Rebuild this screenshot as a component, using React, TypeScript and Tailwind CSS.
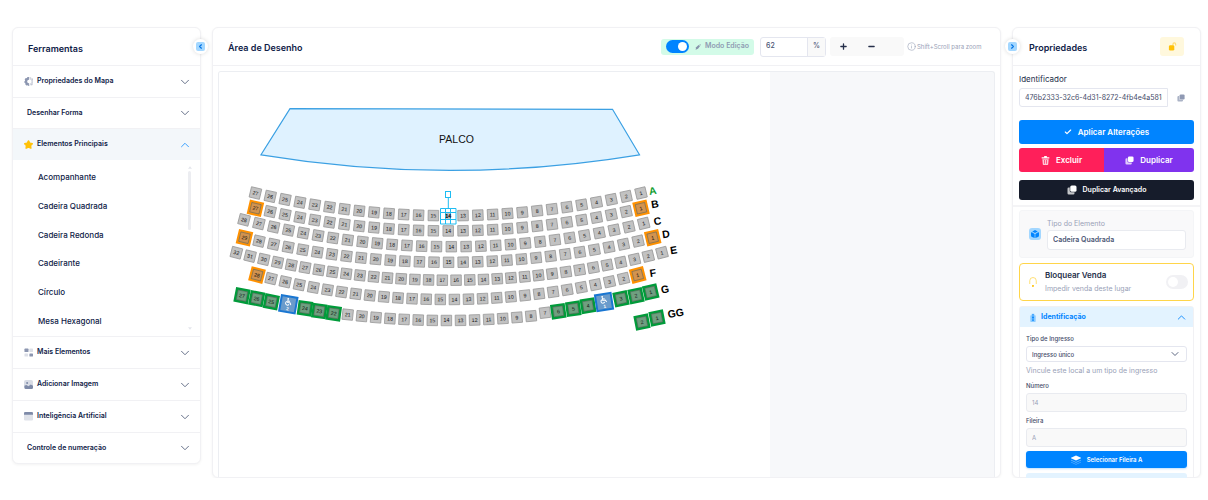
import { useState, type ReactNode } from "react";
import { ChevronDown, ChevronUp, ChevronLeft, ChevronRight, Check, Plus, Minus, Info } from "lucide-react";

type IconProps = { className?: string };

const GearIcon = () => (
  <svg viewBox="0 0 20 20" className="size-[9px] text-[#8c96b0]" fill="none" stroke="currentColor">
    <path d="M11 3.500a6.500 6.500 0 0 0 0 13" strokeWidth="5" />
    <path d="M11 1a9 9 0 0 0 0 18" strokeWidth="2.500" strokeDasharray="4 2.500" />
    <path d="M12 3.500a6.500 6.500 0 0 1 0 13" strokeWidth="4" opacity=".35" />
    <path d="M12 1a9 9 0 0 1 0 18" strokeWidth="2.500" strokeDasharray="4 2.500" opacity=".35" />
  </svg>
);

const StarIcon = () => (
  <svg viewBox="0 0 20 20" className="size-[9px] text-[#ffc107]" fill="currentColor" stroke="currentColor" strokeWidth="3" strokeLinejoin="round">
    <path d="M10 2l3 5 5.500 1.200-3.800 4 .6 6L10 16l-5.300 2.200.6-6-3.800-4L7 7z" />
  </svg>
);

const GridIcon = () => (
  <svg viewBox="0 0 20 20" className="size-[9px] text-[#8c96b0]" fill="currentColor">
    <rect x="1" y="1" width="9" height="8" rx="1.500" />
    <rect x="12" y="12" width="8" height="7" rx="1.500" />
    <rect x="12" y="1" width="8" height="8" rx="1.500" opacity=".3" />
    <rect x="1" y="12" width="8" height="7" rx="1.500" opacity=".3" />
  </svg>
);

const PictureIcon = () => (
  <svg viewBox="0 0 20 20" className="size-[9px] text-[#7e8aa8]" fill="currentColor">
    <rect width="20" height="19" rx="4" opacity=".3" />
    <path d="M1 13l4-2 5 3 5-4 5 3v4a3 3 0 0 1-3 3H4a3 3 0 0 1-3-3z" />
    <circle cx="7" cy="6.500" r="2.200" />
  </svg>
);

const WindowIcon = () => (
  <svg viewBox="0 0 20 20" className="size-[9px] text-[#7e8aa8]" fill="currentColor">
    <rect width="20" height="19" rx="3" opacity=".25" />
    <path d="M3 0h14a3 3 0 0 1 3 3v3H0V3a3 3 0 0 1 3-3z" />
  </svg>
);

const CopyIcon = ({ className }: IconProps) => (
  <svg viewBox="0 0 20 20" className={className} fill="currentColor">
    <rect x="6.500" y="1" width="12.500" height="12.500" rx="3" />
    <path opacity=".75" d="M5.500 5H3.500A2.500 2.500 0 0 0 1 7.500v9A2.500 2.500 0 0 0 3.500 19h9a2.500 2.500 0 0 0 2.500-2.500v-2H8A2.500 2.500 0 0 1 5.500 12z" />
  </svg>
);

const TrashIcon = () => (
  <svg viewBox="0 0 20 20" className="size-[9px]" fill="currentColor">
    <path d="M7 0h6v2.500h5.500v3h-17v-3H7z" />
    <path opacity=".75" fillRule="evenodd" d="M3 7h14l-1 11.500a1.500 1.500 0 0 1-1.500 1.500h-9A1.500 1.500 0 0 1 4 18.500zM7 9v8h1.500V9zm4.500 0v8H13V9z" />
  </svg>
);

const PencilIcon = () => (
  <svg viewBox="0 0 20 20" className="size-1.5 text-[#8793ab]" fill="currentColor">
    <path d="M12 3l5 4-7 9-8 3 2-8z" />
    <path opacity=".6" d="M14 1l4-1 2 3-2 3z" />
  </svg>
);

const LockIcon = () => (
  <svg viewBox="0 0 20 20" className="size-[9px] text-[#ffc107]">
    <rect x="2" y="7" width="12" height="12" rx="3" fill="currentColor" />
    <path d="M11 8V5a3 3 0 0 1 6 0v3" fill="none" stroke="currentColor" strokeWidth="2.500" opacity=".5" />
  </svg>
);

const CubeIcon = () => (
  <svg viewBox="0 0 24 24" className="size-3">
    <rect width="24" height="24" rx="6" fill="#a3d7ff" />
    <path d="M12 4l5.500 2.800L12 10 6.500 6.800zM4 9.500C4 8.500 5 8 5.800 8.500L11.300 12v8L6 18c-1.500-.8-2-2-2-3.500zM20 9.500c0-1-1-1.500-1.800-1L12.700 12v8l5.300-2c1.500-.8 2-2 2-3.500z" fill="#0084ff" />
  </svg>
);

const BulbIcon = () => (
  <svg viewBox="0 0 16 20" className="h-[10px] w-2" fill="none" stroke="#ffd54a" strokeWidth="1.500">
    <path d="M1.500 14V7.500a6.500 6.500 0 0 1 13 0V14" />
    <rect x="7" y="17" width="2" height="2" fill="#ffc107" stroke="#ffc107" />
  </svg>
);

const BadgeIcon = () => (
  <svg viewBox="0 0 16 20" className="h-[9px] w-2">
    <path d="M5 5V1.500h6V5h1.500A1.500 1.500 0 0 1 14 6.500v12a1.500 1.500 0 0 1-1.500 1.500h-9A1.500 1.500 0 0 1 2 18.500v-12A1.500 1.500 0 0 1 3.500 5z" fill="#8ccbff" />
    <path d="M7 2h2v4H7zM6 8h4v3H9v4h1v2H6v-2h1v-4H6z" fill="#0084ff" />
  </svg>
);

const LayersIcon = () => (
  <svg viewBox="0 0 20 20" className="size-[10px]" fill="#fff">
    <path d="M10 1l10 4.500v1L10 11 0 6.500v-1z" />
    <path opacity=".45" d="M0 9.500l10 4.500 10-4.500V11l-10 4.500L0 11z" />
    <path opacity=".3" d="M0 13.500l10 4.500 10-4.500V15l-10 4.500L0 15z" />
  </svg>
);

/* Seat map ---------------------------------------------------------- */

type Kind = "normal" | "orange" | "green" | "wheelchair";
type Seat = { label: string; x: number; y: number; angle: number; kind: Kind };

type Row = { count: number; right: number; step: number; center: number; sag: number; half: number; bottom: number; orange: number[] };

const ROWS: Row[] = [
  { count: 27, right: 641, step: 14.83, center: 448.2, half: 193, sag: 22.7, bottom: 215.7, orange: [] },
  { count: 27, right: 641, step: 14.83, center: 448.2, half: 193, sag: 22.7, bottom: 230.900, orange: [1, 27] },
  { count: 28, right: 643.7, step: 14.8, center: 451, half: 192.7, sag: 23.3, bottom: 246.7, orange: [] },
  { count: 29, right: 652.7, step: 14.58, center: 448.5, half: 204.2, sag: 24.6, bottom: 262.3, orange: [1, 29] },
  { count: 32, right: 662, step: 13.73, center: 449.1, half: 212.8, sag: 27.5, bottom: 280.2, orange: [] },
  { count: 28, right: 637.7, step: 14.1, center: 447.2, half: 190.5, sag: 24.5, bottom: 299.5, orange: [1, 28] },
];

const curvedSeats: Seat[] = ROWS.flatMap((row) =>
  Array.from({ length: row.count }, (_, i) => {
    const x = row.right - i * row.step;
    const u = (x - row.center) / row.half;
    const kind: Kind = row.orange.includes(i + 1) ? "orange" : "normal";
    return {
      label: String(i + 1),
      x,
      y: row.bottom - row.sag * u * u,
      angle: (-Math.atan((2 * row.sag * u) / row.half) * 180) / Math.PI,
      kind,
    };
  }),
);

const frontRow: [string, number, number, number, Kind][] = [
  ["27", 242, 295.7, 11, "green"],
  ["26", 256.7, 298.600, 11, "green"],
  ["25", 271.3, 301.800, 11, "green"],
  ["2", 288.3, 304.3, 10, "wheelchair"],
  ["24", 305, 308.3, 8, "green"],
  ["23", 319.3, 311, 8, "green"],
  ["22", 333.7, 313.300, 8, "green"],
  ["7", 545, 312.7, -7, "normal"],
  ["6", 558.3, 311.3, -8, "green"],
  ["5", 573.3, 308.7, -8, "green"],
  ["4", 588, 305.7, -9, "green"],
  ["1", 604, 302, -9, "wheelchair"],
  ["3", 621, 298.7, -12, "green"],
  ["2", 636, 295.7, -12, "green"],
  ["1", 650.7, 292, -13, "green"],
  ["2", 642, 322, -11, "green"],
  ["1", 657, 318, -11, "green"],
];

const frontSeats: Seat[] = [
  ...frontRow.map(([label, x, y, angle, kind]) => ({ label, x, y, angle, kind })),
  ...Array.from({ length: 14 }, (_, i) => {
    const x = 347.7 + i * 14.1;
    const u = (x - 446) / 99;
    return { label: String(21 - i), x, y: 320.5 - 6 * u * u, angle: -6 * u, kind: "normal" as Kind };
  }),
];

const LETTERS: [string, number, number][] = [
  ["A", 652.7, 190.7],
  ["B", 655, 204],
  ["C", 657.3, 221],
  ["D", 666, 234],
  ["E", 673.5, 250],
  ["F", 652.7, 272.7],
  ["G", 665, 289],
  ["GG", 675.7, 313],
];

const STYLES: Record<Kind, { size: number; fill: string; stroke: string; width: number }> = {
  normal: { size: 10.5, fill: "#c2c2c2", stroke: "#999", width: 0.8 },
  orange: { size: 12.600, fill: "#d2934f", stroke: "#ff9100", width: 2 },
  green: { size: 12.4, fill: "#6f9f80", stroke: "#009b3a", width: 2.4 },
  wheelchair: { size: 15.8, fill: "#6a9bcb", stroke: "#1976d2", width: 2 },
};

function SeatShape({ seat }: { seat: Seat }) {
  const s = STYLES[seat.kind];
  const h = s.size / 2;
  const wheel = seat.kind === "wheelchair";
  return (
    <g transform={`translate(${seat.x} ${seat.y}) rotate(${seat.angle})`}>
      <rect x={-h} y={-h} width={s.size} height={s.size} fill={s.fill} stroke={s.stroke} strokeWidth={s.width} />
      {(seat.kind === "orange" || seat.kind === "green") && (
        <rect x={-4.800} y={-4.800} width={9.600} height={9.600} fill="none" stroke="#4d5a4a" strokeOpacity=".55" strokeWidth=".8" />
      )}
      {wheel && (
        <g fill="none" stroke="#fff" strokeWidth="1">
          <path d="M-1-4.500v2.800h2.600l1 2.200M-1-3.200h2.200M-1.800-2.600a1.900 1.900 0 1 0 2.500 2.600" />
          <circle cx="-1" cy="-5.300" r=".4" fill="#fff" />
        </g>
      )}
      <text y={wheel ? 6 : 1.9} textAnchor="middle" fontSize={wheel ? 4.5 : 5.2} fill={wheel ? "#fff" : "#111"} fontWeight={wheel ? 700 : 400}>
        {seat.label}
      </text>
    </g>
  );
}

function SeatMap() {
  return (
    <svg
      viewBox="219 72 551 406"
      className="h-[406px] w-[551px] shrink-0 bg-white font-['Liberation_Sans',Arial,sans-serif]"
      role="img"
      aria-label="Mapa de assentos"
    >
      <path d="M290 108.700L612.500 109.300 639.500 154.800Q450 186 261 154.800z" fill="#dff2ff" stroke="#3ba0e3" strokeWidth="1.200" />
      <text x="456.500" y="143" textAnchor="middle" fontSize="10.500" fill="#111">
        PALCO
      </text>
      {[...curvedSeats, ...frontSeats].map((seat, i) => (
        <SeatShape key={i} seat={seat} />
      ))}
      {LETTERS.map(([letter, x, y]) => (
        <text
          key={letter}
          transform={`translate(${x} ${y}) rotate(-9)`}
          y="3.800"
          textAnchor="middle"
          fontSize="10.500"
          fontWeight="700"
          fill={letter === "A" ? "#0f9d30" : "#000"}
        >
          {letter}
        </text>
      ))}
      <g stroke="#1ebcf2" fill="none">
        <rect x="445.500" y="191.500" width="5" height="6" fill="#fff" />
        <path d="M448.300 198v10" />
        <path fill="#fff" d="M440.500 208.500h5v4h-5zM445.500 208.500h5v4h-5zM450.500 208.500h5.500v4h-5.500zM440.500 219.500h5v4.500h-5zM445.500 219.500h5v4.500h-5zM450.500 219.500h5.500v4.500h-5.500zM440.500 212.500h5v7h-5zM450.500 212.500h5.500v7h-5.500z" />
        <text x="448.300" y="218" textAnchor="middle" fontSize="5.500" fontWeight="700" fill="#222" stroke="none">
          14
        </text>
      </g>
    </svg>
  );
}

/* Panels ------------------------------------------------------------ */

const CARD = "relative rounded-md border border-[#f1f1f4] bg-white shadow-[0_1px_3px_rgba(0,0,0,0.05)]";
const TITLE = "text-[9px] font-semibold text-[#0f2147]";

function CollapseButton({ side }: { side: "left" | "right" }) {
  const Icon = side === "left" ? ChevronLeft : ChevronRight;
  return (
    <button
      type="button"
      aria-label={side === "left" ? "Recolher ferramentas" : "Recolher propriedades"}
      className={`absolute top-[11px] z-10 flex size-[15px] items-center justify-center rounded-full bg-white shadow-[0_0_4px_rgba(0,0,0,0.15)] ${side === "left" ? "-right-2" : "-left-2"}`}
    >
      <span className="flex size-[9px] items-center justify-center rounded-[2px] bg-[#a3d7ff]">
        <Icon className="size-[7px] text-[#0073e6]" strokeWidth={4} />
      </span>
    </button>
  );
}

function Section({ label, icon, open }: { label: string; icon?: ReactNode; open?: boolean }) {
  return (
    <button
      type="button"
      aria-expanded={!!open}
      className={`flex w-full items-center border-t border-[#f1f1f4] pr-2 text-left ${icon ? "h-8 gap-1 pl-[11px]" : "h-[31px] pl-[14px]"} ${open ? "bg-[#f3f7fa]" : ""}`}
    >
      {icon}
      <span className="flex-1 text-[7px] font-semibold text-[#0f2147]">{label}</span>
      {open ? <ChevronUp className="size-[14px] text-[#2f9bff]" strokeWidth={1.600} /> : <ChevronDown className="size-[14px] text-[#5e6882]" strokeWidth={1.600} />}
    </button>
  );
}

const ELEMENTS = ["Acompanhante", "Cadeira Quadrada", "Cadeira Redonda", "Cadeirante", "Círculo", "Mesa Hexagonal"];

function Tools() {
  return (
    <aside className={`${CARD} w-[189px] shrink-0 self-start`}>
      <CollapseButton side="left" />
      <h2 className={`flex h-[37px] items-center pt-1 pl-[15px] ${TITLE}`}>Ferramentas</h2>
      <Section label="Propriedades do Mapa" icon={<GearIcon />} />
      <Section label="Desenhar Forma" />
      <Section label="Elementos Principais" icon={<StarIcon />} open />
      <div className="flex h-44 pr-2">
        <ul className="flex flex-1 flex-col pt-[3px] pb-px pl-[25px]">
          {ELEMENTS.map((name) => (
            <li key={name} className="flex flex-1 items-center">
              <button type="button" className="text-[8px] font-medium text-[#0f2147]">{name}</button>
            </li>
          ))}
        </ul>
        <div className="flex w-[5px] flex-col items-center justify-between py-1.5" aria-hidden="true">
          <svg viewBox="0 0 6 4" className="h-[3px] w-1" fill="#e4e6ec"><path d="M3 0l3 4H0z" /></svg>
          <span className="mt-0.5 mb-auto h-[59px] w-[3px] rounded-full bg-[#ecedf1]" />
          <svg viewBox="0 0 6 4" className="h-[3px] w-1" fill="#e4e6ec"><path d="M3 4L0 0h6z" /></svg>
        </div>
      </div>
      <Section label="Mais Elementos" icon={<GridIcon />} />
      <Section label="Adicionar Imagem" icon={<PictureIcon />} />
      <Section label="Inteligência Artificial" icon={<WindowIcon />} />
      <Section label="Controle de numeração" />
    </aside>
  );
}

function DrawingArea() {
  const [editing, setEditing] = useState(true);
  const [zoom, setZoom] = useState(62);
  return (
    <main className={`${CARD} flex min-w-0 flex-1 flex-col`}>
      <header className="flex h-[38px] shrink-0 items-center border-b border-[#f1f1f4] px-[15px]">
        <h2 className={`flex-1 pt-0.5 ${TITLE}`}>Área de Desenho</h2>
        <label className="mr-1.5 flex h-4 items-center rounded-[3px] bg-[#d3fbe8] px-[5px]">
          <input type="checkbox" className="peer sr-only" checked={editing} onChange={(e) => setEditing(e.target.checked)} />
          <span className="flex h-[13px] w-[23px] items-center rounded-full bg-[#c9ced8] p-0.5 peer-checked:justify-end peer-checked:bg-[#0084ff]">
            <span className="size-[9px] rounded-full bg-white" />
          </span>
          <span className="flex items-center gap-1 pl-1.5 text-[7px] font-semibold text-[#8f9bb3]">
            <PencilIcon />
            Modo Edição
          </span>
        </label>
        <div className="mr-1 flex h-5 w-[66px] rounded-[3px] border border-[#e4e6ef] text-[7px] font-medium text-[#4b5675]">
          <input aria-label="Zoom" className="min-w-0 flex-1 pl-[5px] outline-none" value={zoom} onChange={(e) => setZoom(Number(e.target.value) || 0)} />
          <span className="flex w-[18px] items-center justify-center border-l border-[#e4e6ef] bg-[#f9f9f9]">%</span>
        </div>
        <div className="mr-[3px] flex h-[19px] w-[74px] items-center rounded-[3px] bg-[#f9f9f9] text-[#252f4a]">
          <button type="button" aria-label="Aumentar zoom" className="flex w-[26px] justify-center" onClick={() => setZoom(zoom + 1)}>
            <Plus className="size-[9px]" strokeWidth={3.500} />
          </button>
          <button type="button" aria-label="Diminuir zoom" className="flex w-[30px] justify-center" onClick={() => setZoom(zoom - 1)}>
            <Minus className="size-[9px]" strokeWidth={3.500} />
          </button>
        </div>
        <p className="flex w-[78px] items-center gap-px text-[6px] text-[#99a1b7]">
          <Info className="size-[9px]" strokeWidth={1.600} />
          Shift+Scroll para zoom
        </p>
      </header>
      <div className="mx-[5px] mt-[5px] flex min-h-0 flex-1 overflow-hidden rounded-t-[3px] border border-b-0 border-[#eceef2] bg-[#f7f8fa]">
        <SeatMap />
      </div>
    </main>
  );
}

const LABEL = "block text-[6px] leading-[9px] font-medium text-[#3f4a68]";

function Properties() {
  const [blocked, setBlocked] = useState(false);
  return (
    <aside className={`${CARD} w-[189px] shrink-0`}>
      <CollapseButton side="right" />
      <header className="flex h-[38px] items-center justify-between border-b border-[#f1f1f4] px-4">
        <h2 className={`pt-0.5 ${TITLE}`}>Propriedades</h2>
        <button type="button" aria-label="Desbloquear" className="flex h-[19px] w-6 items-center justify-center rounded-[3px] bg-[#fff8dd]">
          <LockIcon />
        </button>
      </header>

      <div className="px-1.5 pt-2">
        <label htmlFor="identifier" className="block text-[8px] leading-[10px] text-[#252f4a]">Identificador</label>
        <div className="mt-1 flex items-center">
          <input id="identifier" readOnly defaultValue="476b2333-32c6-4d31-8272-4fb4e4a581e0" className="h-[19px] w-[149px] rounded-l-[3px] border border-[#e4e6ef] px-[5px] text-[7px] text-[#3f4a68] outline-none" />
          <button type="button" aria-label="Copiar identificador" className="flex flex-1 justify-center text-[#8f99b3]">
            <CopyIcon className="size-2" />
          </button>
        </div>
      </div>

      <div className="border-b-2 border-[#f4f4f6] px-1.5 pt-[13px] pb-[5px] text-[8px] font-semibold text-white">
        <button type="button" className="flex h-6 w-full items-center justify-center gap-1.5 rounded-[3px] bg-[#0084ff]">
          <Check className="size-2" strokeWidth={3.500} />
          Aplicar Alterações
        </button>
        <div className="mt-1 flex h-6 overflow-hidden rounded-[3px]">
          <button type="button" className="flex w-[85px] items-center justify-center gap-1.5 bg-[#ff1f5a]">
            <TrashIcon />
            Excluir
          </button>
          <button type="button" className="flex flex-1 items-center justify-center gap-1.5 bg-[#8033ee]">
            <CopyIcon className="size-[9px]" />
            Duplicar
          </button>
        </div>
        <button type="button" className="mt-2 flex h-5 w-full items-center justify-center gap-1.5 rounded-[3px] bg-[#161c2b] text-[7px]">
          <CopyIcon className="size-[10px]" />
          Duplicar Avançado
        </button>
      </div>

      <div className="flex flex-col gap-[5px] px-1.5 pt-[3px]">
        <div className="flex h-12 items-center gap-1.5 rounded-[3px] border border-[#f4f5f7] bg-[#f9f9fa] pr-[7px] pl-[9px]">
          <CubeIcon />
          <div className="min-w-0 flex-1">
            <label htmlFor="kind" className="block text-[7px] leading-[9px] text-[#99a1b7]">Tipo do Elemento</label>
            <input id="kind" readOnly defaultValue="Cadeira Quadrada" className="mt-0.5 block h-5 w-full rounded-[3px] border border-[#e9ebf0] bg-white px-[5px] text-[7px] font-semibold text-[#4b5675] outline-none" />
          </div>
        </div>

        <label className="flex h-[38px] items-center rounded-[4px] border border-[#ffd54a] pr-[5px] pl-[9px]">
          <BulbIcon />
          <span className="flex-1 pl-2">
            <span className="block text-[8px] leading-[14px] font-semibold text-[#252f4a]">Bloquear Venda</span>
            <span className="block text-[7px] leading-[14px] text-[#99a1b7]">Impedir venda deste lugar</span>
          </span>
          <input type="checkbox" className="peer sr-only" checked={blocked} onChange={(e) => setBlocked(e.target.checked)} />
          <span className="flex h-[14px] w-[22px] items-center rounded-full bg-[#f1f1f4] p-0.5 peer-checked:justify-end peer-checked:bg-[#0084ff]">
            <span className="size-[10px] rounded-full bg-white" />
          </span>
        </label>

        <section className="rounded-[3px] border border-[#f1f1f4]">
          <button type="button" aria-expanded="true" className="flex h-5 w-full items-center gap-1 bg-[#e3f3ff] pr-[5px] pl-[9px] text-[7px] font-bold text-[#0084ff]">
            <BadgeIcon />
            <span className="flex-1 text-left">Identificação</span>
            <ChevronUp className="size-[13px]" strokeWidth={1.600} />
          </button>
          <div className="px-1.5 pt-[7px]">
            <label htmlFor="ticket" className={LABEL}>Tipo de Ingresso</label>
            <div className="relative mt-[3px]">
              <select id="ticket" className="block h-4 w-full appearance-none rounded-[3px] border border-[#e4e6ef] bg-white px-[5px] text-[6px] font-medium text-[#3f4a68]">
                <option>Ingresso único</option>
              </select>
              <ChevronDown className="pointer-events-none absolute top-0.5 right-1.5 size-3 text-[#5e6882]" />
            </div>
            <p className="mt-1 text-[7px] leading-[9px] text-[#99a1b7]">Vincule este local a um tipo de ingresso</p>
            <label htmlFor="number" className={`mt-1.5 ${LABEL}`}>Número</label>
            <input id="number" disabled defaultValue="14" className="mt-[3px] block h-[19px] w-full rounded-[3px] border border-[#e9ebf0] bg-[#f9f9f9] px-[5px] text-[6px] text-[#99a1b7]" />
            <label htmlFor="row" className={`mt-1 ${LABEL}`}>Fileira</label>
            <input id="row" disabled defaultValue="A" className="mt-[3px] block h-[19px] w-full rounded-[3px] border border-[#e9ebf0] bg-[#f9f9f9] px-[5px] text-[6px] text-[#99a1b7]" />
            <button type="button" className="mt-1 flex h-[17px] w-full items-center justify-center gap-1.5 rounded-[3px] bg-[#0084ff] text-[6px] font-semibold text-white shadow-[0_1px_2px_rgba(0,132,255,0.25)]">
              <LayersIcon />
              Selecionar Fileira A
            </button>
            <button type="button" aria-label="Mais opções da fileira" className="mt-[5px] block h-[17px] w-full rounded-[3px] bg-[#e3f3ff]" />
          </div>
        </section>
      </div>
    </aside>
  );
}

export default function App() {
  return (
    <div className="h-screen bg-white pb-[22px] font-[Inter,sans-serif]">
      <div className="flex h-full gap-[11px] overflow-hidden pt-[27px] pr-[7px] pl-3">
        <Tools />
        <DrawingArea />
        <Properties />
      </div>
    </div>
  );
}
